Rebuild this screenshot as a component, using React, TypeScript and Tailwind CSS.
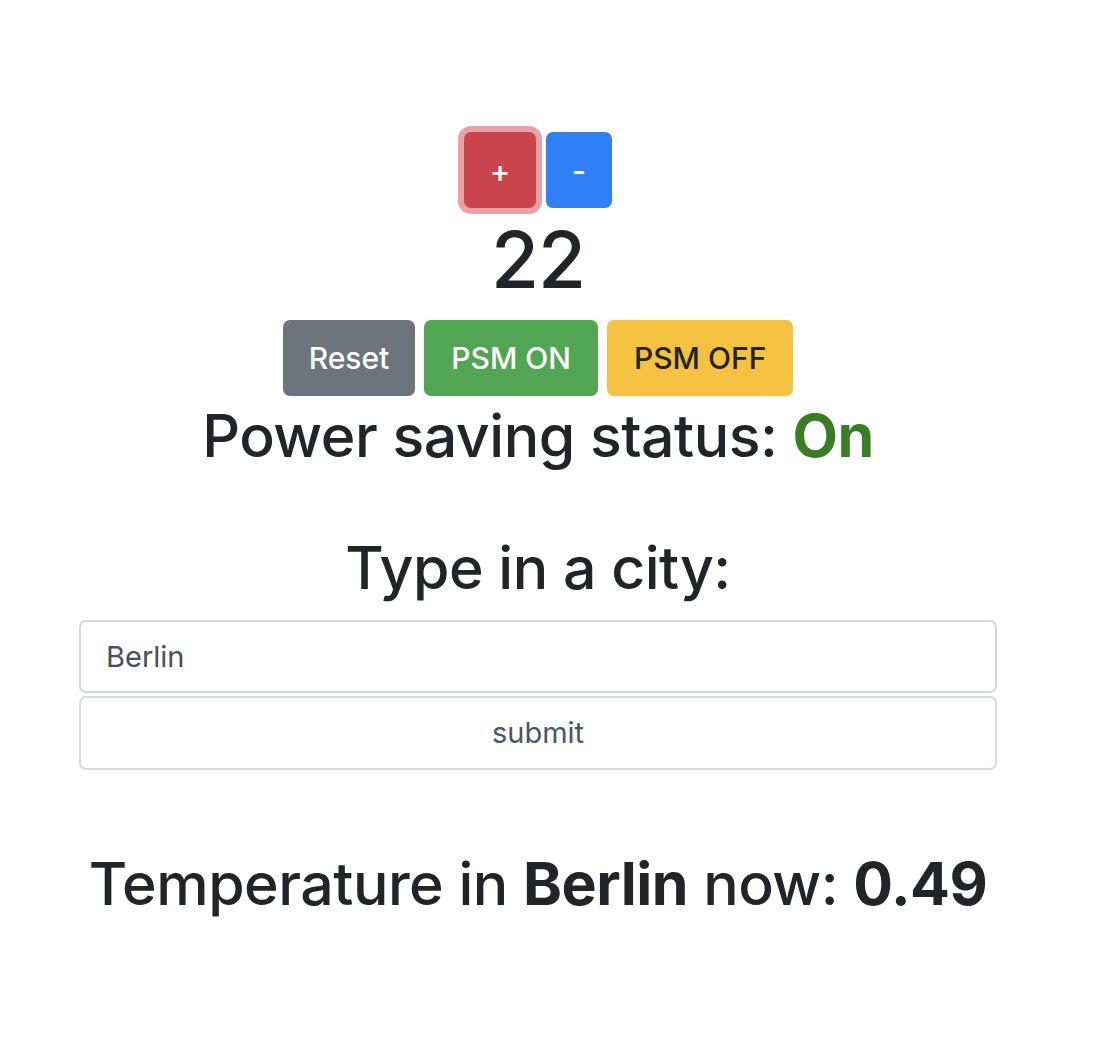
import { useState } from "react";

export default function App() {
  const [count] = useState(22);
  const [city] = useState("Berlin");

  return (
    <div className="w-[1076px] min-h-[1042px] bg-white text-[#212529] font-['Inter','Liberation_Sans',sans-serif]">
      <div className="flex flex-col items-center pt-[132px]">
        <div className="flex gap-[10px]">
          <button className="w-[72px] h-[76px] rounded-[7px] bg-[#c9444b] text-white text-[31px] font-medium leading-none ring-[6px] ring-[#e8a2a6]">
            +
          </button>
          <button className="w-[66px] h-[76px] rounded-[7px] bg-[#2f80f7] text-white text-[31px] font-medium leading-none">
            -
          </button>
        </div>
        <div className="text-[78px] leading-[100px] mt-[2px] font-medium tracking-[-1px]">{count}</div>
        <div className="flex gap-[9px] mt-[10px]">
          <button className="h-[76px] px-[26px] rounded-[7px] bg-[#6c757d] text-white text-[30px] font-medium">Reset</button>
          <button className="h-[76px] px-[27px] rounded-[7px] bg-[#52a552] text-white text-[30px] font-medium">PSM ON</button>
          <button className="h-[76px] px-[27px] rounded-[7px] bg-[#f4c141] text-[#212529] text-[30px] font-medium">PSM OFF</button>
        </div>
        <h2 className="text-[59px] leading-[80px] font-medium tracking-[-0.5px]">
          Power saving status: <span className="font-bold text-[#3a7d22]">On</span>
        </h2>
        <h2 className="mt-[52px] text-[59px] leading-[80px] font-medium tracking-[-0.5px]">Type in a city:</h2>
        <form className="w-[918px] mt-[12px] flex flex-col gap-[3px]" onSubmit={(e) => e.preventDefault()}>
          <input
            defaultValue={city}
            className="h-[73px] px-[25px] rounded-[7px] border-2 border-[#d3d8dd] text-[29px] text-[#495057] outline-none"
          />
          <button className="h-[74px] rounded-[7px] border-2 border-[#d8dbde] text-[29px] text-[#4a5560]">submit</button>
        </form>
        <h2 className="mt-[74px] text-[59px] leading-[80px] font-medium tracking-[-0.5px]">
          Temperature in <b className="font-bold">{city}</b> now: <b className="font-bold">0.49</b>
        </h2>
      </div>
    </div>
  );
}
